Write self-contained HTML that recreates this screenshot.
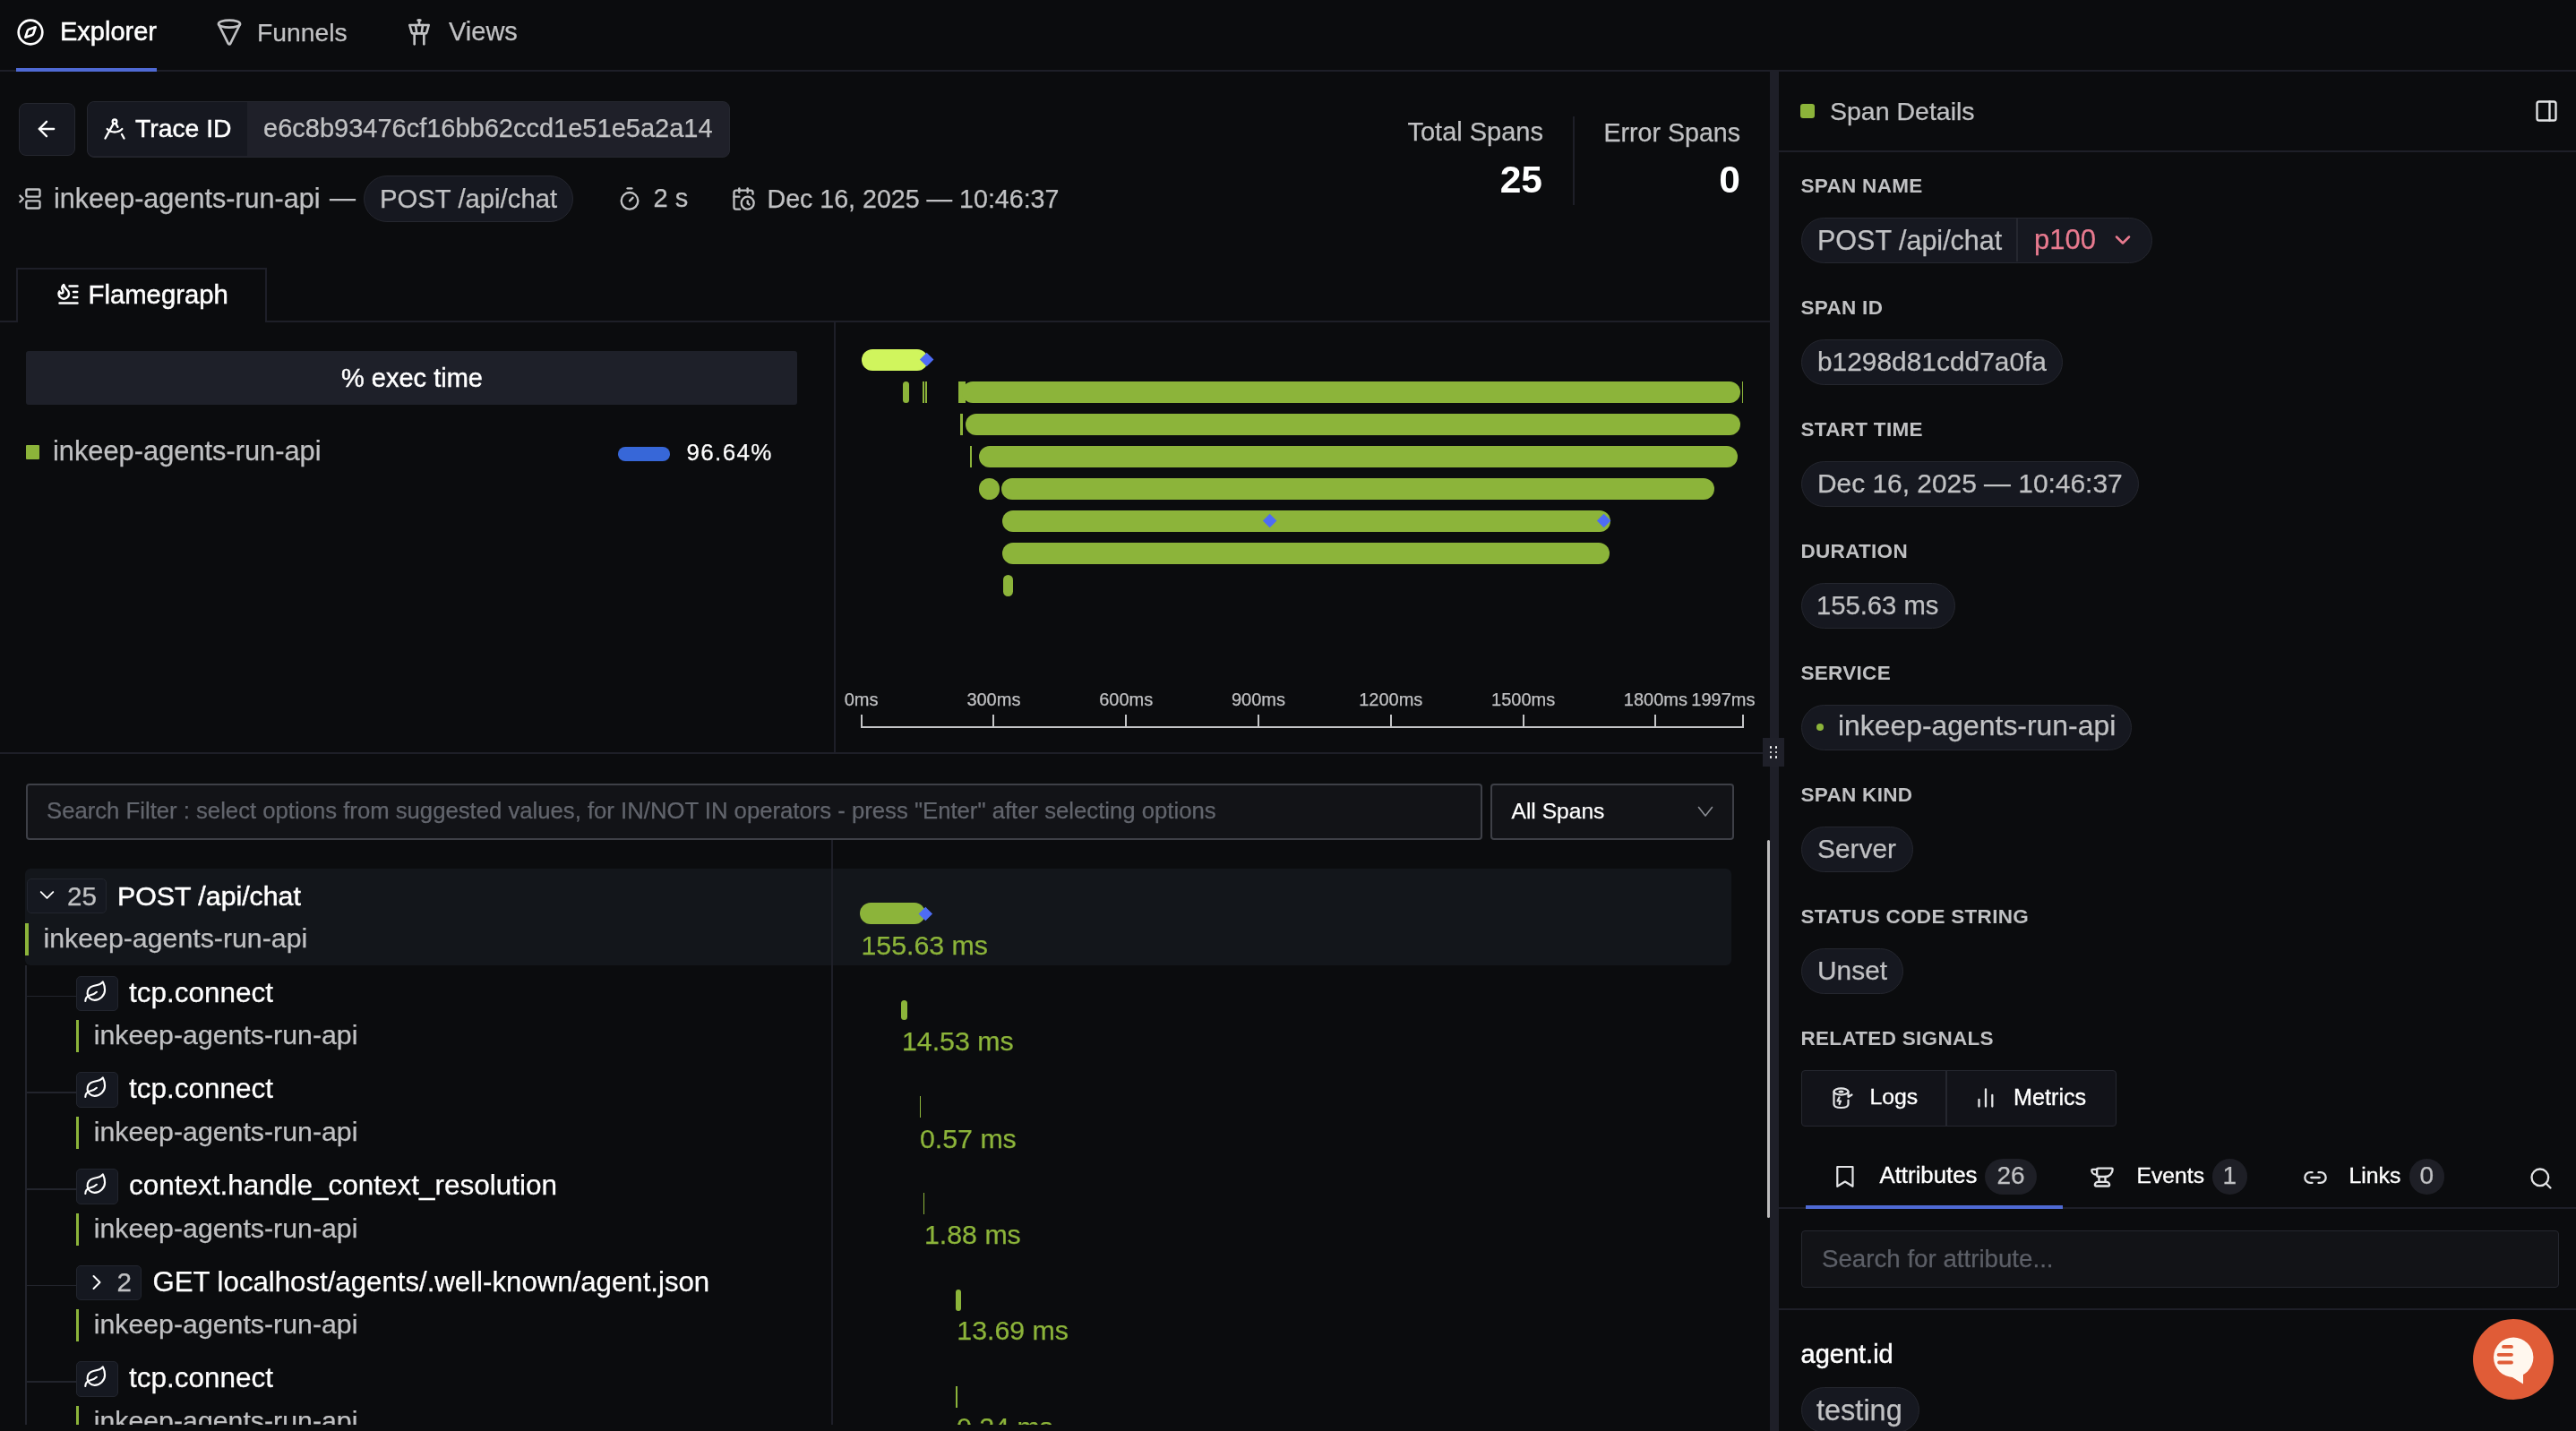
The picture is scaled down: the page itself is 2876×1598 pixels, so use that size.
<!DOCTYPE html><html><head><meta charset="utf-8"><style>
html,body{margin:0;padding:0;width:2876px;height:1598px;overflow:hidden;background:#0b0c0e;font-family:"Liberation Sans",sans-serif;-webkit-font-smoothing:antialiased;}
.t{position:absolute;line-height:1;white-space:pre;}
.r{position:absolute;box-sizing:border-box;}
</style></head><body><div style="position:absolute;left:0;top:0;width:2876px;height:1598px;will-change:transform;">
<div class="r" style="left:0.0px;top:78.0px;width:2876.0px;height:2.0px;background:#1e1f28;border-radius:0px;"></div>
<div class="r" style="left:18.0px;top:76.0px;width:157.0px;height:4.0px;background:#4f6ad4;border-radius:0px;"></div>
<svg class="r" style="left:18.0px;top:20.0px;" width="32" height="32" viewBox="0 0 24 24" fill="none" stroke="#ffffff" stroke-width="2" stroke-linecap="round" stroke-linejoin="round"><circle cx="12" cy="12" r="10"/><path d="m16.24 7.76-1.804 5.411a2 2 0 0 1-1.265 1.265L7.76 16.24l1.804-5.411a2 2 0 0 1 1.265-1.265z"/></svg>
<div class="t" style="left:67.0px;top:21.4px;font-size:29px;color:#ffffff;font-weight:400;-webkit-text-stroke:0.5px #ffffff;">Explorer</div>
<svg class="r" style="left:239.5px;top:20.3px;transform:rotate(180deg);" width="32" height="32" viewBox="0 0 24 24" fill="none" stroke="#c0c1c3" stroke-width="2" stroke-linecap="round" stroke-linejoin="round"><path d="m20.9 18.55-8-15.98a1 1 0 0 0-1.8 0l-8 15.98"/><ellipse cx="12" cy="19" rx="9" ry="3"/></svg>
<div class="t" style="left:287.0px;top:21.9px;font-size:28.3px;color:#c0c1c3;font-weight:400;-webkit-text-stroke:0.25px #c0c1c3;">Funnels</div>
<svg class="r" style="left:452.3px;top:19.7px;" width="32" height="32" viewBox="0 0 24 24" fill="none" stroke="#c0c1c3" stroke-width="2" stroke-linecap="round" stroke-linejoin="round"><path d="M18.2 12.27 20 6H4l1.8 6.27a1 1 0 0 0 .95.73h10.5a1 1 0 0 0 .96-.73Z"/><path d="M8 13v9"/><path d="M16 22v-9"/><path d="m9 6 1 7"/><path d="m15 6-1 7"/><path d="M12 6V2"/><path d="M13 2h-2"/></svg>
<div class="t" style="left:501.0px;top:21.4px;font-size:29px;color:#c0c1c3;font-weight:400;-webkit-text-stroke:0.25px #c0c1c3;">Views</div>
<div class="r" style="left:20.5px;top:114.5px;width:63.0px;height:59.0px;background:#161820;border:1.5px solid #25272f;border-radius:8px;"></div>
<svg class="r" style="left:38.1px;top:130.3px;" width="28" height="28" viewBox="0 0 24 24" fill="none" stroke="#ffffff" stroke-width="2" stroke-linecap="round" stroke-linejoin="round"><path d="m12 19-7-7 7-7"/><path d="M19 12H5"/></svg>
<div class="r" style="left:96.5px;top:112.5px;width:718.5px;height:63.0px;background:#1f2029;border:1.5px solid #25272f;border-radius:8px;"></div>
<div class="r" style="left:98.0px;top:114.0px;width:178.0px;height:60.0px;background:#161820;border-radius:7px;border-top-right-radius:0;border-bottom-right-radius:0;"></div>
<svg class="r" style="left:113.7px;top:129.7px;" width="28" height="28" viewBox="0 0 24 24" fill="none" stroke="#ffffff" stroke-width="2" stroke-linecap="round" stroke-linejoin="round"><path d="m12.99 6.74 1.93 3.44"/><path d="M19.136 12a10 10 0 0 1-14.271 0"/><path d="m21 21-2.16-3.84"/><path d="m3 21 8.02-14.26"/><circle cx="12" cy="5" r="2"/></svg>
<div class="t" style="left:151.0px;top:129.4px;font-size:28.3px;color:#ffffff;font-weight:400;-webkit-text-stroke:0.5px #ffffff;">Trace ID</div>
<div class="t" style="left:294.0px;top:128.8px;font-size:29px;color:#c0c1c3;font-weight:400;-webkit-text-stroke:0.25px #c0c1c3;">e6c8b93476cf16bb62ccd1e51e5a2a14</div>
<svg class="r" style="left:20.1px;top:207.9px;" width="28" height="28" viewBox="0 0 24 24" fill="none" stroke="#c0c1c3" stroke-width="2" stroke-linecap="round" stroke-linejoin="round"><rect width="13" height="7" x="8" y="3" rx="1"/><path d="m2 9 3 3-3 3"/><rect width="13" height="7" x="8" y="14" rx="1"/></svg>
<div class="t" style="left:60.0px;top:205.5px;font-size:30.6px;color:#c0c1c3;font-weight:400;-webkit-text-stroke:0.25px #c0c1c3;">inkeep-agents-run-api</div>
<div class="t" style="left:368.0px;top:206.8px;font-size:29px;color:#c0c1c3;font-weight:400;-webkit-text-stroke:0.25px #c0c1c3;">—</div>
<div class="r" style="left:406.0px;top:196.0px;width:234.0px;height:52.0px;background:#161820;border:1.5px solid #25272f;border-radius:26px;"></div>
<div class="t" style="left:424.0px;top:207.1px;font-size:29.3px;color:#c0c1c3;font-weight:400;-webkit-text-stroke:0.25px #c0c1c3;">POST /api/chat</div>
<svg class="r" style="left:688.7px;top:208.1px;" width="28" height="28" viewBox="0 0 24 24" fill="none" stroke="#c0c1c3" stroke-width="2" stroke-linecap="round" stroke-linejoin="round"><line x1="10" x2="14" y1="2" y2="2"/><line x1="12" x2="15" y1="14" y2="11"/><circle cx="12" cy="14" r="8"/></svg>
<div class="t" style="left:729.5px;top:207.3px;font-size:29px;color:#c0c1c3;font-weight:400;-webkit-text-stroke:0.25px #c0c1c3;">2 s</div>
<svg class="r" style="left:815.7px;top:207.8px;" width="28" height="28" viewBox="0 0 24 24" fill="none" stroke="#c0c1c3" stroke-width="2" stroke-linecap="round" stroke-linejoin="round"><path d="M21 7.5V6a2 2 0 0 0-2-2H5a2 2 0 0 0-2 2v14a2 2 0 0 0 2 2h3.5"/><path d="M16 2v4"/><path d="M8 2v4"/><path d="M3 10h5"/><path d="M17.5 17.5 16 16.3V14"/><circle cx="16" cy="16" r="6"/></svg>
<div class="t" style="left:856.5px;top:207.7px;font-size:28.6px;color:#c0c1c3;font-weight:400;-webkit-text-stroke:0.25px #c0c1c3;">Dec 16, 2025 — 10:46:37</div>
<div class="t" style="right:1153.0px;top:133.3px;font-size:29px;color:#c0c1c3;font-weight:400;-webkit-text-stroke:0.25px #c0c1c3;">Total Spans</div>
<div class="t" style="right:1154.0px;top:180.4px;font-size:42.5px;color:#ffffff;font-weight:700;">25</div>
<div class="r" style="left:1756.0px;top:130.0px;width:2.0px;height:99.0px;background:#1e1f28;border-radius:0px;"></div>
<div class="t" style="right:933.0px;top:133.7px;font-size:28.6px;color:#c0c1c3;font-weight:400;-webkit-text-stroke:0.25px #c0c1c3;">Error Spans</div>
<div class="t" style="right:933.0px;top:180.4px;font-size:42.5px;color:#ffffff;font-weight:700;">0</div>
<div class="r" style="left:0.0px;top:358.0px;width:1976.0px;height:2.0px;background:#1e1f28;border-radius:0px;"></div>
<div class="r" style="left:18.0px;top:298.5px;width:280.0px;height:61.5px;background:#0b0c0e;border:2px solid #1e1f28;border-radius:0px;border-bottom:none;"></div>
<svg class="r" style="left:58px;top:310px;" width="37" height="35" viewBox="58 310 37 35" fill="none"><g stroke="#ffffff" stroke-width="2.5" stroke-linecap="round" stroke-linejoin="round"><g transform="translate(61.4 315.6) scale(0.82)" stroke-width="3.05"><path d="M8.5 14.5A2.5 2.5 0 0 0 11 12c0-1.38-.5-2-1-3-1.072-2.143-.224-4.054 2-6 .5 2.5 2 4.9 4 6.5 2 1.6 3 3.5 3 5.5a7 7 0 1 1-14 0c0-1.153.433-2.294 1-3a2.5 2.5 0 0 0 2.5 2.5z"/></g><path d="M77.5 319.5 H86.5 M82 326 H86.2 M82 332 H86.2 M66.5 338.5 H86.5"/></g></svg>
<div class="t" style="left:98.5px;top:313.6px;font-size:29.3px;color:#ffffff;font-weight:400;-webkit-text-stroke:0.5px #ffffff;">Flamegraph</div>
<div class="r" style="left:931.0px;top:360.0px;width:2.0px;height:481.0px;background:#1e1f28;border-radius:0px;"></div>
<div class="r" style="left:28.5px;top:392.0px;width:861.5px;height:59.5px;background:#1e2029;border-radius:3px;"></div>
<div class="t" style="left:-40.0px;width:1000px;text-align:center;top:408.4px;font-size:29px;color:#ffffff;font-weight:400;-webkit-text-stroke:0.45px #ffffff;">% exec time</div>
<div class="r" style="left:28.5px;top:497.0px;width:15.5px;height:16.0px;background:#8cb43a;border-radius:1px;"></div>
<div class="t" style="left:59.0px;top:488.8px;font-size:30.8px;color:#c0c1c3;font-weight:400;-webkit-text-stroke:0.25px #c0c1c3;">inkeep-agents-run-api</div>
<div class="r" style="left:690.0px;top:498.5px;width:58.0px;height:16.5px;background:#3767d8;border-radius:8px;"></div>
<div class="t" style="left:766.5px;top:492.4px;font-size:26px;color:#ffffff;font-weight:400;-webkit-text-stroke:0.25px #ffffff;letter-spacing:1.35px;">96.64%</div>
<div class="r" style="left:0.0px;top:840.0px;width:1976.0px;height:2.0px;background:#1e1f28;border-radius:0px;"></div>
<div class="r" style="left:962.0px;top:390.0px;width:74.0px;height:24.0px;background:#d0f55d;border-radius:12px;"></div>
<div class="r" style="left:1008.0px;top:426.0px;width:7.0px;height:24.0px;background:#8cb43a;border-radius:12px;"></div>
<div class="r" style="left:1030.0px;top:426.0px;width:1.5px;height:24.0px;background:#8cb43a;border-radius:0px;"></div>
<div class="r" style="left:1033.0px;top:426.0px;width:1.5px;height:24.0px;background:#8cb43a;border-radius:0px;"></div>
<div class="r" style="left:1070.0px;top:426.0px;width:8.0px;height:24.0px;background:#8cb43a;border-radius:0px;"></div>
<div class="r" style="left:1074.0px;top:426.0px;width:869.0px;height:24.0px;background:#8cb43a;border-radius:12px;"></div>
<div class="r" style="left:1944.5px;top:426.0px;width:1.5px;height:24.0px;background:#8cb43a;border-radius:0px;"></div>
<div class="r" style="left:1071.5px;top:462.0px;width:3.5px;height:24.0px;background:#8cb43a;border-radius:0px;"></div>
<div class="r" style="left:1078.0px;top:462.0px;width:865.0px;height:24.0px;background:#8cb43a;border-radius:12px;"></div>
<div class="r" style="left:1083.0px;top:498.0px;width:2.0px;height:24.0px;background:#8cb43a;border-radius:0px;"></div>
<div class="r" style="left:1093.0px;top:498.0px;width:847.0px;height:24.0px;background:#8cb43a;border-radius:12px;"></div>
<div class="r" style="left:1093.0px;top:534.0px;width:23.0px;height:24.0px;background:#8cb43a;border-radius:12px;"></div>
<div class="r" style="left:1118.0px;top:534.0px;width:796.0px;height:24.0px;background:#8cb43a;border-radius:12px;"></div>
<div class="r" style="left:1119.0px;top:570.0px;width:678.5px;height:24.0px;background:#8cb43a;border-radius:12px;"></div>
<div class="r" style="left:1119.0px;top:606.0px;width:678.0px;height:24.0px;background:#8cb43a;border-radius:12px;"></div>
<div class="r" style="left:1119.5px;top:642.0px;width:11.5px;height:24.0px;background:#8cb43a;border-radius:12px;"></div>
<div class="r" style="left:1029.3px;top:396.3px;width:11.3px;height:11.3px;background:#4e6cf5;transform:rotate(45deg);"></div>
<div class="r" style="left:1411.8px;top:576.3px;width:11.3px;height:11.3px;background:#4e6cf5;transform:rotate(45deg);"></div>
<div class="r" style="left:1784.8px;top:576.3px;width:11.3px;height:11.3px;background:#4e6cf5;transform:rotate(45deg);"></div>
<div class="r" style="left:961.0px;top:811.0px;width:986.0px;height:2.0px;background:#c4c5c7;border-radius:0px;"></div>
<div class="r" style="left:960.6px;top:798.0px;width:2.0px;height:14.0px;background:#c4c5c7;border-radius:0px;"></div>
<div class="t" style="left:461.6px;width:1000px;text-align:center;top:770.5px;font-size:20px;color:#c0c1c3;font-weight:400;-webkit-text-stroke:0.25px #c0c1c3;">0ms</div>
<div class="r" style="left:1108.4px;top:798.0px;width:2.0px;height:14.0px;background:#c4c5c7;border-radius:0px;"></div>
<div class="t" style="left:609.4px;width:1000px;text-align:center;top:770.5px;font-size:20px;color:#c0c1c3;font-weight:400;-webkit-text-stroke:0.25px #c0c1c3;">300ms</div>
<div class="r" style="left:1256.2px;top:798.0px;width:2.0px;height:14.0px;background:#c4c5c7;border-radius:0px;"></div>
<div class="t" style="left:757.2px;width:1000px;text-align:center;top:770.5px;font-size:20px;color:#c0c1c3;font-weight:400;-webkit-text-stroke:0.25px #c0c1c3;">600ms</div>
<div class="r" style="left:1404.0px;top:798.0px;width:2.0px;height:14.0px;background:#c4c5c7;border-radius:0px;"></div>
<div class="t" style="left:905.0px;width:1000px;text-align:center;top:770.5px;font-size:20px;color:#c0c1c3;font-weight:400;-webkit-text-stroke:0.25px #c0c1c3;">900ms</div>
<div class="r" style="left:1551.8px;top:798.0px;width:2.0px;height:14.0px;background:#c4c5c7;border-radius:0px;"></div>
<div class="t" style="left:1052.8px;width:1000px;text-align:center;top:770.5px;font-size:20px;color:#c0c1c3;font-weight:400;-webkit-text-stroke:0.25px #c0c1c3;">1200ms</div>
<div class="r" style="left:1699.6px;top:798.0px;width:2.0px;height:14.0px;background:#c4c5c7;border-radius:0px;"></div>
<div class="t" style="left:1200.6px;width:1000px;text-align:center;top:770.5px;font-size:20px;color:#c0c1c3;font-weight:400;-webkit-text-stroke:0.25px #c0c1c3;">1500ms</div>
<div class="r" style="left:1847.4px;top:798.0px;width:2.0px;height:14.0px;background:#c4c5c7;border-radius:0px;"></div>
<div class="t" style="left:1348.4px;width:1000px;text-align:center;top:770.5px;font-size:20px;color:#c0c1c3;font-weight:400;-webkit-text-stroke:0.25px #c0c1c3;">1800ms</div>
<div class="r" style="left:1945.0px;top:798.0px;width:2.0px;height:14.0px;background:#c4c5c7;border-radius:0px;"></div>
<div class="t" style="right:916.5px;top:770.5px;font-size:20px;color:#c0c1c3;font-weight:400;-webkit-text-stroke:0.25px #c0c1c3;">1997ms</div>
<div class="r" style="left:1976.0px;top:80.0px;width:10.0px;height:1518.0px;background:#1e1f28;border-radius:0px;"></div>
<div class="r" style="left:1968.0px;top:824.0px;width:24.0px;height:32.0px;background:#1f2029;border-radius:0px;"></div>
<div class="r" style="left:1975.8px;top:833.3px;width:2.4px;height:2.4px;background:#ffffff;border-radius:2px;"></div>
<div class="r" style="left:1975.8px;top:838.8px;width:2.4px;height:2.4px;background:#ffffff;border-radius:2px;"></div>
<div class="r" style="left:1975.8px;top:844.3px;width:2.4px;height:2.4px;background:#ffffff;border-radius:2px;"></div>
<div class="r" style="left:1981.8px;top:833.3px;width:2.4px;height:2.4px;background:#ffffff;border-radius:2px;"></div>
<div class="r" style="left:1981.8px;top:838.8px;width:2.4px;height:2.4px;background:#ffffff;border-radius:2px;"></div>
<div class="r" style="left:1981.8px;top:844.3px;width:2.4px;height:2.4px;background:#ffffff;border-radius:2px;"></div>
<div class="r" style="left:28.5px;top:874.5px;width:1626.0px;height:63.0px;background:#121317;border:2px solid #3e4047;border-radius:4px;"></div>
<div class="t" style="left:52.0px;top:893.2px;font-size:25.7px;color:#62656d;font-weight:400;-webkit-text-stroke:0.25px #62656d;">Search Filter : select options from suggested values, for IN/NOT IN operators - press "Enter" after selecting options</div>
<div class="r" style="left:1663.5px;top:874.5px;width:272.0px;height:63.0px;background:#121317;border:2px solid #3e4047;border-radius:4px;"></div>
<div class="t" style="left:1687.5px;top:894.1px;font-size:24.6px;color:#ffffff;font-weight:400;-webkit-text-stroke:0.25px #ffffff;">All Spans</div>
<svg class="r" style="left:1890px;top:895px;" width="28" height="23" viewBox="1890 895 28 23" fill="none"><path d="M1896.5 901.5 L1904 911 L1911.5 901.5" stroke="#8a8d94" stroke-width="1.6" stroke-linecap="round" stroke-linejoin="round"/></svg>
<div class="r" style="left:928.0px;top:937.5px;width:2.0px;height:653.5px;background:#1e1f28;border-radius:0px;"></div>
<div class="r" style="left:1973.0px;top:938.0px;width:3.0px;height:422.0px;background:#bdbdbd;border-radius:1.5px;"></div>
<div class="r" style="left:28.2px;top:970.4px;width:1905.3px;height:107.2px;background:#13161b;border-radius:6px;"></div>
<div class="r" style="left:928.0px;top:970.4px;width:2.0px;height:107.2px;background:#1e1f28;border-radius:0px;"></div>
<div class="r" style="left:28.0px;top:1077.6px;width:1.5px;height:513.4px;background:#22242c;border-radius:0px;"></div>
<div class="r" style="left:29.5px;top:981.4px;width:89.1px;height:38.8px;background:#151820;border:1.5px solid #22252e;border-radius:5px;"></div>
<svg class="r" style="left:38.5px;top:986.0px;" width="27" height="27" viewBox="0 0 24 24" fill="none" stroke="#ffffff" stroke-width="1.7" stroke-linecap="round" stroke-linejoin="round"><path d="m6 9 6 6 6-6"/></svg>
<div class="t" style="left:75.0px;top:986.2px;font-size:29.6px;color:#c0c1c3;font-weight:400;-webkit-text-stroke:0.25px #c0c1c3;">25</div>
<div class="t" style="left:131.0px;top:985.5px;font-size:30.3px;color:#ffffff;font-weight:400;-webkit-text-stroke:0.5px #ffffff;">POST /api/chat</div>
<div class="r" style="left:28.2px;top:1031.4px;width:3.8px;height:35.4px;background:#8cb43a;border-radius:0px;"></div>
<div class="t" style="left:48.5px;top:1033.2px;font-size:30.3px;color:#c0c1c3;font-weight:400;-webkit-text-stroke:0.25px #c0c1c3;">inkeep-agents-run-api</div>
<div class="r" style="left:29.5px;top:1111.8px;width:55.0px;height:1.5px;background:#22242c;border-radius:0px;"></div>
<div class="r" style="left:84.5px;top:1089.8px;width:47.2px;height:39.5px;background:#151820;border:1.5px solid #22252e;border-radius:5px;"></div>
<svg class="r" style="left:93.4px;top:1093.6px;" width="27.5" height="27.5" viewBox="0 0 24 24" fill="none" stroke="#ffffff" stroke-width="1.85" stroke-linecap="round" stroke-linejoin="round"><path d="M11 20A7 7 0 0 1 9.8 6.1C15.5 5 17 4.48 19 2c1 2 2 4.18 2 8 0 5.5-4.78 10-10 10Z"/><path d="M2 21c0-3 1.85-5.36 5.08-6C9.5 14.52 12 13 13 12"/></svg>
<div class="t" style="left:144.0px;top:1092.6px;font-size:31.5px;color:#ffffff;font-weight:400;-webkit-text-stroke:0.25px #ffffff;">tcp.connect</div>
<div class="r" style="left:84.7px;top:1139.4px;width:3.3px;height:36.0px;background:#8cb43a;border-radius:0px;"></div>
<div class="t" style="left:104.7px;top:1141.4px;font-size:30.3px;color:#c0c1c3;font-weight:400;-webkit-text-stroke:0.25px #c0c1c3;">inkeep-agents-run-api</div>
<div class="r" style="left:29.5px;top:1219.4px;width:55.0px;height:1.5px;background:#22242c;border-radius:0px;"></div>
<div class="r" style="left:84.5px;top:1197.4px;width:47.2px;height:39.5px;background:#151820;border:1.5px solid #22252e;border-radius:5px;"></div>
<svg class="r" style="left:93.4px;top:1201.2px;" width="27.5" height="27.5" viewBox="0 0 24 24" fill="none" stroke="#ffffff" stroke-width="1.85" stroke-linecap="round" stroke-linejoin="round"><path d="M11 20A7 7 0 0 1 9.8 6.1C15.5 5 17 4.48 19 2c1 2 2 4.18 2 8 0 5.5-4.78 10-10 10Z"/><path d="M2 21c0-3 1.85-5.36 5.08-6C9.5 14.52 12 13 13 12"/></svg>
<div class="t" style="left:144.0px;top:1200.2px;font-size:31.5px;color:#ffffff;font-weight:400;-webkit-text-stroke:0.25px #ffffff;">tcp.connect</div>
<div class="r" style="left:84.7px;top:1247.0px;width:3.3px;height:36.0px;background:#8cb43a;border-radius:0px;"></div>
<div class="t" style="left:104.7px;top:1249.0px;font-size:30.3px;color:#c0c1c3;font-weight:400;-webkit-text-stroke:0.25px #c0c1c3;">inkeep-agents-run-api</div>
<div class="r" style="left:29.5px;top:1327.0px;width:55.0px;height:1.5px;background:#22242c;border-radius:0px;"></div>
<div class="r" style="left:84.5px;top:1305.0px;width:47.2px;height:39.5px;background:#151820;border:1.5px solid #22252e;border-radius:5px;"></div>
<svg class="r" style="left:93.4px;top:1308.8px;" width="27.5" height="27.5" viewBox="0 0 24 24" fill="none" stroke="#ffffff" stroke-width="1.85" stroke-linecap="round" stroke-linejoin="round"><path d="M11 20A7 7 0 0 1 9.8 6.1C15.5 5 17 4.48 19 2c1 2 2 4.18 2 8 0 5.5-4.78 10-10 10Z"/><path d="M2 21c0-3 1.85-5.36 5.08-6C9.5 14.52 12 13 13 12"/></svg>
<div class="t" style="left:144.0px;top:1307.8px;font-size:31.5px;color:#ffffff;font-weight:400;-webkit-text-stroke:0.25px #ffffff;">context.handle_context_resolution</div>
<div class="r" style="left:84.7px;top:1354.6px;width:3.3px;height:36.0px;background:#8cb43a;border-radius:0px;"></div>
<div class="t" style="left:104.7px;top:1356.6px;font-size:30.3px;color:#c0c1c3;font-weight:400;-webkit-text-stroke:0.25px #c0c1c3;">inkeep-agents-run-api</div>
<div class="r" style="left:29.5px;top:1434.6px;width:55.0px;height:1.5px;background:#22242c;border-radius:0px;"></div>
<div class="r" style="left:84.5px;top:1413.1px;width:73.1px;height:38.7px;background:#151820;border:1.5px solid #22252e;border-radius:5px;"></div>
<svg class="r" style="left:94.0px;top:1417.8px;" width="28" height="28" viewBox="0 0 24 24" fill="none" stroke="#ffffff" stroke-width="1.7" stroke-linecap="round" stroke-linejoin="round"><path d="m9 18 6-6-6-6"/></svg>
<div class="t" style="left:130.5px;top:1417.0px;font-size:29.6px;color:#c0c1c3;font-weight:400;-webkit-text-stroke:0.25px #c0c1c3;">2</div>
<div class="t" style="left:170.4px;top:1415.7px;font-size:31.2px;color:#ffffff;font-weight:400;-webkit-text-stroke:0.25px #ffffff;">GET localhost/agents/.well-known/agent.json</div>
<div class="r" style="left:84.7px;top:1462.2px;width:3.3px;height:36.0px;background:#8cb43a;border-radius:0px;"></div>
<div class="t" style="left:104.7px;top:1464.2px;font-size:30.3px;color:#c0c1c3;font-weight:400;-webkit-text-stroke:0.25px #c0c1c3;">inkeep-agents-run-api</div>
<div class="r" style="left:29.5px;top:1542.2px;width:55.0px;height:1.5px;background:#22242c;border-radius:0px;"></div>
<div class="r" style="left:84.5px;top:1520.2px;width:47.2px;height:39.5px;background:#151820;border:1.5px solid #22252e;border-radius:5px;"></div>
<svg class="r" style="left:93.4px;top:1524.0px;" width="27.5" height="27.5" viewBox="0 0 24 24" fill="none" stroke="#ffffff" stroke-width="1.85" stroke-linecap="round" stroke-linejoin="round"><path d="M11 20A7 7 0 0 1 9.8 6.1C15.5 5 17 4.48 19 2c1 2 2 4.18 2 8 0 5.5-4.78 10-10 10Z"/><path d="M2 21c0-3 1.85-5.36 5.08-6C9.5 14.52 12 13 13 12"/></svg>
<div class="t" style="left:144.0px;top:1523.0px;font-size:31.5px;color:#ffffff;font-weight:400;-webkit-text-stroke:0.25px #ffffff;">tcp.connect</div>
<div class="r" style="left:84.7px;top:1569.8px;width:3.3px;height:36.0px;background:#8cb43a;border-radius:0px;"></div>
<div class="t" style="left:104.7px;top:1571.8px;font-size:30.3px;color:#c0c1c3;font-weight:400;-webkit-text-stroke:0.25px #c0c1c3;">inkeep-agents-run-api</div>
<div class="r" style="left:959.5px;top:1008.0px;width:73.5px;height:24.0px;background:#8cb43a;border-radius:12px;"></div>
<div class="r" style="left:1027.7px;top:1014.7px;width:10.6px;height:10.6px;background:#4e6cf5;transform:rotate(45deg);"></div>
<div class="t" style="left:961.5px;top:1040.6px;font-size:30.3px;color:#8cb43a;font-weight:400;-webkit-text-stroke:0.25px #8cb43a;">155.63 ms</div>
<div class="r" style="left:1006.0px;top:1116.7px;width:7.0px;height:22.8px;background:#8cb43a;border-radius:4px;"></div>
<div class="t" style="left:1007.0px;top:1148.2px;font-size:30.3px;color:#8cb43a;font-weight:400;-webkit-text-stroke:0.25px #8cb43a;">14.53 ms</div>
<div class="r" style="left:1026.5px;top:1224.0px;width:1.5px;height:24.0px;background:#8cb43a;border-radius:0px;"></div>
<div class="t" style="left:1027.0px;top:1257.2px;font-size:30.3px;color:#8cb43a;font-weight:400;-webkit-text-stroke:0.25px #8cb43a;">0.57 ms</div>
<div class="r" style="left:1030.5px;top:1332.0px;width:1.5px;height:24.0px;background:#8cb43a;border-radius:0px;"></div>
<div class="t" style="left:1032.0px;top:1363.7px;font-size:30.3px;color:#8cb43a;font-weight:400;-webkit-text-stroke:0.25px #8cb43a;">1.88 ms</div>
<div class="r" style="left:1066.5px;top:1440.0px;width:6.5px;height:24.0px;background:#8cb43a;border-radius:4px;"></div>
<div class="t" style="left:1068.3px;top:1471.2px;font-size:30.3px;color:#8cb43a;font-weight:400;-webkit-text-stroke:0.25px #8cb43a;">13.69 ms</div>
<div class="r" style="left:1067.0px;top:1548.0px;width:1.5px;height:24.0px;background:#8cb43a;border-radius:0px;"></div>
<div class="t" style="left:1068.0px;top:1579.2px;font-size:30.3px;color:#8cb43a;font-weight:400;-webkit-text-stroke:0.25px #8cb43a;">0.24 ms</div>
<div class="r" style="left:0.0px;top:1591.0px;width:1976.0px;height:7.0px;background:#0b0c0e;border-radius:0px;"></div>
<div class="r" style="left:2010.0px;top:116.0px;width:16.0px;height:16.0px;background:#8cb43a;border-radius:3px;"></div>
<div class="t" style="left:2043.0px;top:110.3px;font-size:28.5px;color:#c0c1c3;font-weight:400;-webkit-text-stroke:0.25px #c0c1c3;">Span Details</div>
<svg class="r" style="left:2829.0px;top:109.7px;" width="28" height="28" viewBox="0 0 24 24" fill="none" stroke="#e2e3e5" stroke-width="2" stroke-linecap="round" stroke-linejoin="round"><rect width="18" height="18" x="3" y="3" rx="2"/><path d="M15 3v18"/></svg>
<div class="r" style="left:1986.0px;top:167.5px;width:890.0px;height:2.0px;background:#1e1f28;border-radius:0px;"></div>
<div class="t" style="left:2010.5px;top:197.4px;font-size:22.5px;color:#c0c1c3;font-weight:700;letter-spacing:0.3px;">SPAN NAME</div>
<div class="t" style="left:2010.5px;top:333.4px;font-size:22.5px;color:#c0c1c3;font-weight:700;letter-spacing:0.3px;">SPAN ID</div>
<div class="t" style="left:2010.5px;top:469.4px;font-size:22.5px;color:#c0c1c3;font-weight:700;letter-spacing:0.3px;">START TIME</div>
<div class="t" style="left:2010.5px;top:605.4px;font-size:22.5px;color:#c0c1c3;font-weight:700;letter-spacing:0.3px;">DURATION</div>
<div class="t" style="left:2010.5px;top:741.4px;font-size:22.5px;color:#c0c1c3;font-weight:700;letter-spacing:0.3px;">SERVICE</div>
<div class="t" style="left:2010.5px;top:877.4px;font-size:22.5px;color:#c0c1c3;font-weight:700;letter-spacing:0.3px;">SPAN KIND</div>
<div class="t" style="left:2010.5px;top:1013.4px;font-size:22.5px;color:#c0c1c3;font-weight:700;letter-spacing:0.3px;">STATUS CODE STRING</div>
<div class="t" style="left:2010.5px;top:1149.4px;font-size:22.5px;color:#c0c1c3;font-weight:700;letter-spacing:0.3px;">RELATED SIGNALS</div>
<div class="r" style="left:2010.8px;top:242.5px;width:392.7px;height:51.0px;background:#161820;border:1.5px solid #25272f;border-radius:26px;"></div>
<div class="r" style="left:2251.0px;top:244.0px;width:2.0px;height:48.0px;background:#25272f;border-radius:0px;"></div>
<div class="t" style="left:2029.0px;top:252.6px;font-size:30.5px;color:#c0c1c3;font-weight:400;-webkit-text-stroke:0.25px #c0c1c3;">POST /api/chat</div>
<div class="t" style="left:2271.0px;top:252.2px;font-size:31px;color:#e87a8f;font-weight:400;-webkit-text-stroke:0.25px #e87a8f;">p100</div>
<svg class="r" style="left:2356.0px;top:253.5px;" width="28" height="28" viewBox="0 0 24 24" fill="none" stroke="#e87a8f" stroke-width="2.2" stroke-linecap="round" stroke-linejoin="round"><path d="m6 9 6 6 6-6"/></svg>
<div class="r" style="left:2010.8px;top:378.5px;width:292.2px;height:51.0px;background:#161820;border:1.5px solid #25272f;border-radius:26px;"></div>
<div class="t" style="left:2029.0px;top:389.1px;font-size:29.9px;color:#c0c1c3;font-weight:400;-webkit-text-stroke:0.25px #c0c1c3;">b1298d81cdd7a0fa</div>
<div class="r" style="left:2010.8px;top:514.5px;width:377.2px;height:51.0px;background:#161820;border:1.5px solid #25272f;border-radius:26px;"></div>
<div class="t" style="left:2029.0px;top:525.1px;font-size:29.9px;color:#c0c1c3;font-weight:400;-webkit-text-stroke:0.25px #c0c1c3;">Dec 16, 2025 — 10:46:37</div>
<div class="r" style="left:2010.8px;top:650.5px;width:172.7px;height:51.0px;background:#161820;border:1.5px solid #25272f;border-radius:26px;"></div>
<div class="t" style="left:2028.0px;top:661.7px;font-size:29.2px;color:#c0c1c3;font-weight:400;-webkit-text-stroke:0.25px #c0c1c3;">155.63 ms</div>
<div class="r" style="left:2010.8px;top:786.5px;width:369.2px;height:51.0px;background:#161820;border:1.5px solid #25272f;border-radius:26px;"></div>
<div class="r" style="left:2028.0px;top:808.0px;width:7.5px;height:7.5px;background:#8cb43a;border-radius:4px;"></div>
<div class="t" style="left:2052.0px;top:795.4px;font-size:31.9px;color:#c0c1c3;font-weight:400;-webkit-text-stroke:0.25px #c0c1c3;">inkeep-agents-run-api</div>
<div class="r" style="left:2010.8px;top:922.5px;width:125.2px;height:51.0px;background:#161820;border:1.5px solid #25272f;border-radius:26px;"></div>
<div class="t" style="left:2029.0px;top:933.1px;font-size:29.9px;color:#c0c1c3;font-weight:400;-webkit-text-stroke:0.25px #c0c1c3;">Server</div>
<div class="r" style="left:2010.8px;top:1058.5px;width:114.7px;height:51.0px;background:#161820;border:1.5px solid #25272f;border-radius:26px;"></div>
<div class="t" style="left:2029.0px;top:1069.1px;font-size:29.9px;color:#c0c1c3;font-weight:400;-webkit-text-stroke:0.25px #c0c1c3;">Unset</div>
<div class="r" style="left:2010.8px;top:1195.0px;width:352.2px;height:62.5px;background:#121319;border:1.5px solid #25272f;border-radius:4px;"></div>
<div class="r" style="left:2171.5px;top:1196.0px;width:2.0px;height:61.0px;background:#25272f;border-radius:0px;"></div>
<svg class="r" style="left:2040px;top:1208px;" width="35" height="35" viewBox="2040 1208 35 35" fill="none"><g stroke="#e2e3e5" stroke-width="2.2" stroke-linecap="round" stroke-linejoin="round"><ellipse cx="2055.5" cy="1219" rx="8" ry="3.6"/><ellipse cx="2055.5" cy="1219" rx="2.2" ry="0.8" stroke-width="1.6"/><path d="M2047.5 1219 V1233 C2047.5 1235.5 2051 1237 2055.5 1237 C2060 1237 2063.5 1235.5 2063.5 1233 V1228.5 M2063.5 1219 V1225 L2067.5 1222.5 M2053.5 1225.5 L2051.5 1229.5 L2055 1229.5 L2053.5 1233"/></g></svg>
<div class="t" style="left:2087.5px;top:1213.2px;font-size:24.8px;color:#ffffff;font-weight:400;-webkit-text-stroke:0.35px #ffffff;">Logs</div>
<svg class="r" style="left:2200px;top:1210px;" width="35" height="32" viewBox="2200 1210 35 32" fill="none"><g stroke="#e2e3e5" stroke-width="2.3" stroke-linecap="round"><path d="M2209.5 1235.5 V1228 M2217 1235.5 V1216.5 M2224.3 1235.5 V1223"/></g></svg>
<div class="t" style="left:2248.0px;top:1212.9px;font-size:25.2px;color:#ffffff;font-weight:400;-webkit-text-stroke:0.35px #ffffff;">Metrics</div>
<div class="r" style="left:1986.0px;top:1348.0px;width:890.0px;height:2.0px;background:#1e1f28;border-radius:0px;"></div>
<div class="r" style="left:2016.0px;top:1346.0px;width:287.0px;height:4.0px;background:#4f6ad4;border-radius:0px;"></div>
<svg class="r" style="left:2045px;top:1298px;" width="30" height="32" viewBox="2045 1298 30 32" fill="none"><path d="M2051.3 1303 H2068.5 V1324.8 L2059.9 1319.5 L2051.3 1324.8 Z" stroke="#e2e3e5" stroke-width="2.2" stroke-linejoin="round"/></svg>
<div class="t" style="left:2098.5px;top:1300.1px;font-size:25.8px;color:#ffffff;font-weight:400;-webkit-text-stroke:0.35px #ffffff;">Attributes</div>
<div class="r" style="left:2216.0px;top:1294.0px;width:58.0px;height:40.0px;background:#1e1f26;border-radius:20px;"></div>
<div class="t" style="left:1745.0px;width:1000px;text-align:center;top:1299.2px;font-size:28px;color:#c0c1c3;font-weight:400;-webkit-text-stroke:0.25px #c0c1c3;">26</div>
<svg class="r" style="left:2333.0px;top:1299.5px;" width="28" height="28" viewBox="0 0 24 24" fill="none" stroke="#e2e3e5" stroke-width="2" stroke-linecap="round" stroke-linejoin="round"><path d="M7 10H6a4 4 0 0 1-4-4 1 1 0 0 1 1-1h4"/><path d="M7 5a1 1 0 0 1 1-1h13a1 1 0 0 1 1 1 7 7 0 0 1-7 7H8a1 1 0 0 1-1-1z"/><path d="M9 12v5"/><path d="M15 12v5"/><path d="M5 20a3 3 0 0 1 3-3h8a3 3 0 0 1 3 3 1 1 0 0 1-1 1H6a1 1 0 0 1-1-1"/></svg>
<div class="t" style="left:2385.5px;top:1301.0px;font-size:24.7px;color:#ffffff;font-weight:400;-webkit-text-stroke:0.35px #ffffff;">Events</div>
<div class="r" style="left:2469.5px;top:1294.0px;width:39.5px;height:40.0px;background:#1e1f26;border-radius:20px;"></div>
<div class="t" style="left:1989.3px;width:1000px;text-align:center;top:1299.2px;font-size:28px;color:#c0c1c3;font-weight:400;-webkit-text-stroke:0.25px #c0c1c3;">1</div>
<svg class="r" style="left:2570.5px;top:1300.5px;" width="28" height="28" viewBox="0 0 24 24" fill="none" stroke="#e2e3e5" stroke-width="2" stroke-linecap="round" stroke-linejoin="round"><path d="M9 17H7A5 5 0 0 1 7 7h2"/><path d="M15 7h2a5 5 0 1 1 0 10h-2"/><line x1="8" x2="16" y1="12" y2="12"/></svg>
<div class="t" style="left:2622.5px;top:1300.9px;font-size:24.8px;color:#ffffff;font-weight:400;-webkit-text-stroke:0.35px #ffffff;">Links</div>
<div class="r" style="left:2690.0px;top:1294.0px;width:38.5px;height:40.0px;background:#1e1f26;border-radius:20px;"></div>
<div class="t" style="left:2209.3px;width:1000px;text-align:center;top:1299.2px;font-size:28px;color:#c0c1c3;font-weight:400;-webkit-text-stroke:0.25px #c0c1c3;">0</div>
<svg class="r" style="left:2822.5px;top:1301.5px;" width="28" height="28" viewBox="0 0 24 24" fill="none" stroke="#e2e3e5" stroke-width="2" stroke-linecap="round" stroke-linejoin="round"><circle cx="11" cy="11" r="8"/><path d="m21 21-4.3-4.3"/></svg>
<div class="r" style="left:2010.8px;top:1374.0px;width:846.2px;height:64.0px;background:#121317;border:1.5px solid #25272f;border-radius:4px;"></div>
<div class="t" style="left:2034.0px;top:1391.5px;font-size:27.7px;color:#5c5f67;font-weight:400;-webkit-text-stroke:0.25px #5c5f67;">Search for attribute...</div>
<div class="r" style="left:1986.0px;top:1461.0px;width:890.0px;height:2.0px;background:#1e1f28;border-radius:0px;"></div>
<div class="t" style="left:2010.5px;top:1497.8px;font-size:29px;color:#ffffff;font-weight:400;-webkit-text-stroke:0.5px #ffffff;">agent.id</div>
<div class="r" style="left:2010.8px;top:1549.0px;width:132.2px;height:51.0px;background:#161820;border:1.5px solid #25272f;border-radius:26px;"></div>
<div class="t" style="left:2028.0px;top:1559.4px;font-size:32.5px;color:#c0c1c3;font-weight:400;-webkit-text-stroke:0.25px #c0c1c3;">testing</div>
<div class="r" style="left:2761.3px;top:1473px;width:89.8px;height:89.8px;border-radius:50%;background:#e05c37;"></div>
<svg class="r" style="left:2770px;top:1480px;" width="75" height="75" viewBox="2770 1480 75 75" fill="none"><circle cx="2806.2" cy="1515.8" r="22.2" fill="#fff7ee"/><path d="M2800 1535 L2817 1545.5 L2817 1530 Z" fill="#fff7ee"/><g stroke="#e05c37" stroke-width="3.8" stroke-linecap="round"><path d="M2795 1503.9 H2804 M2789.6 1512.8 H2804 M2790.1 1521.5 H2804"/></g></svg>
</div></body></html>
